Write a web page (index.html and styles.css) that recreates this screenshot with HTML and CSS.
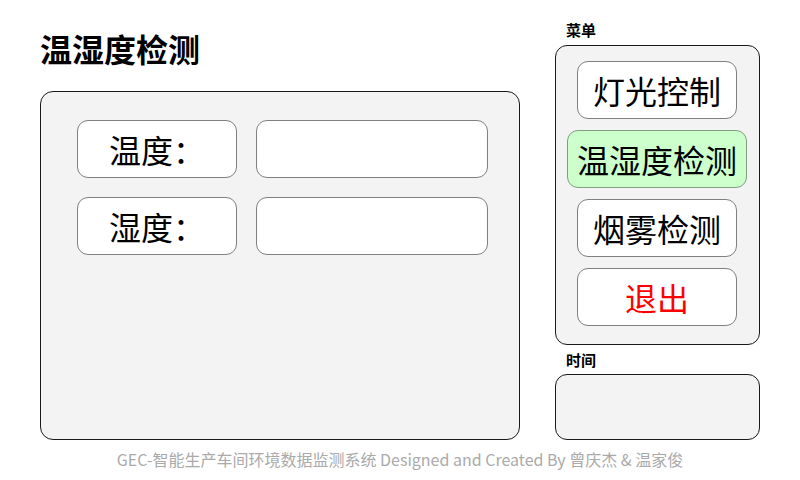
FILE: index.html
```html
<!DOCTYPE html>
<html lang="zh-CN">
<head>
<meta charset="utf-8">
<title>温湿度检测</title>
<link rel="stylesheet" href="styles.css">
</head>
<body>
<div class="page">
  <div class="main">
    <div class="left">
      <h1 class="title">温湿度检测</h1>
      <div class="panel">
        <div class="row">
          <div class="label">温度：</div>
          <div class="value"></div>
        </div>
        <div class="row">
          <div class="label">湿度：</div>
          <div class="value"></div>
        </div>
      </div>
    </div>
    <div class="right">
      <div class="caption">菜单</div>
      <div class="menu">
        <div class="btn">灯光控制</div>
        <div class="btn active">温湿度检测</div>
        <div class="btn">烟雾检测</div>
        <div class="btn exit">退出</div>
      </div>
      <div class="caption time-caption">时间</div>
      <div class="timebox"></div>
    </div>
  </div>
  <div class="footer">GEC-智能生产车间环境数据监测系统 Designed and Created By 曾庆杰 &amp; 温家俊</div>
</div>
</body>
</html>
```
FILE: styles.css
```css
* { box-sizing: border-box; }
html, body {
  margin: 0;
  padding: 0;
  background: #ffffff;
}
body {
  font-family: "Noto Sans CJK SC", "Noto Sans", sans-serif;
  color: #000;
}
.page {
  width: 800px;
  height: 480px;
  display: flex;
  flex-direction: column;
}
.main {
  display: flex;
  padding-left: 40px;
  gap: 35px;
}
.left {
  width: 480px;
  display: flex;
  flex-direction: column;
}
.title {
  margin: 32px 0 27px 0;
  font-size: 32px;
  line-height: 32px;
  height: 32px;
  font-weight: 700;
}
.panel {
  height: 349px;
  background: #f3f3f3;
  border: 1px solid #1a1a1a;
  border-radius: 13px;
  padding: 28px 0 0 36px;
  display: flex;
  flex-direction: column;
  gap: 19px;
}
.row {
  display: flex;
  gap: 19px;
}
.label, .value, .btn {
  height: 58px;
  background: #ffffff;
  border: 1px solid #808080;
  border-radius: 11px;
}
.label {
  width: 160px;
  display: flex;
  align-items: center;
  justify-content: center;
  font-size: 32px;
  line-height: 32px;
}
.value {
  width: 232px;
}
.right {
  width: 205px;
  padding-top: 22px;
  display: flex;
  flex-direction: column;
}
.caption {
  font-size: 15px;
  line-height: 15px;
  height: 15px;
  font-weight: 700;
  padding-left: 11px;
  margin-bottom: 8px;
}
.time-caption {
  margin-top: 7px;
  margin-bottom: 7px;
}
.menu {
  height: 300px;
  background: #f3f3f3;
  border: 1px solid #1a1a1a;
  border-radius: 12px;
  padding: 15px 1px 0 0;
  display: flex;
  flex-direction: column;
  align-items: center;
  gap: 11px;
}
.btn {
  width: 160px;
  display: flex;
  align-items: center;
  justify-content: center;
  font-size: 32px;
  line-height: 32px;
}
.btn.active {
  width: 180px;
  background: #ccffcc;
  border-color: #7f9f7f;
}
.btn.exit {
  color: #ff0000;
}
.timebox {
  height: 66px;
  background: #f3f3f3;
  border: 1px solid #1a1a1a;
  border-radius: 12px;
}
.footer {
  margin-top: 11px;
  text-align: center;
  font-size: 16px;
  line-height: 16px;
  color: #aaaaaa;
}
```
